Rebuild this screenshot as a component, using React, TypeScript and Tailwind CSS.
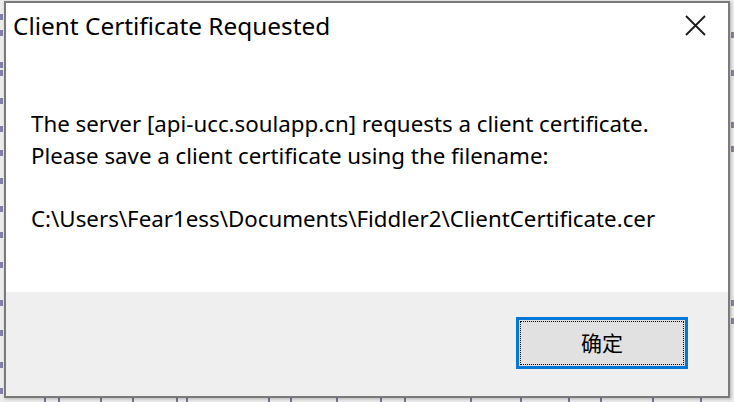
// fragments of the window behind the dialog, seen only in the thin strips around it
const leftMarks = [14, 30, 62, 70, 98, 126, 150, 178, 206, 232, 262, 300, 330, 362, 388];
const rightMarks = [32, 70, 122, 146, 300, 318];
const bottomMarks = [44, 58, 100, 132, 176, 186, 268, 290, 336, 380, 404, 470, 520, 568, 600, 652, 700];

export default function App() {
  return (
    <div className="relative w-[734px] h-[402px] overflow-hidden bg-[#ececec] font-['Segoe_UI','Noto_Sans','Noto_Sans_CJK_SC',sans-serif]">
      {/* page behind the dialog */}
      <div className="flex flex-col h-full">
        <div className="flex flex-1">
          <div className="w-[4px] flex flex-col">
            {leftMarks.map((y, i) => (
              <div
                key={i}
                className="w-[3px] h-[6px] bg-[#3b3b7a]/60"
                style={{ marginTop: i === 0 ? y : y - leftMarks[i - 1] - 6 }}
              />
            ))}
          </div>
          <div className="flex-1" />
          <div className="w-[4px] flex flex-col items-end">
            {rightMarks.map((y, i) => (
              <div
                key={i}
                className="w-[3px] h-[6px] bg-[#4a3a70]/60"
                style={{ marginTop: i === 0 ? y : y - rightMarks[i - 1] - 6 }}
              />
            ))}
          </div>
        </div>
        <div className="h-[4px] flex">
          {bottomMarks.map((x, i) => (
            <div
              key={i}
              className="w-[2px] h-[4px] bg-[#2a2a5e]/60"
              style={{ marginLeft: i === 0 ? x : x - bottomMarks[i - 1] - 2 }}
            />
          ))}
        </div>
      </div>

      <div className="absolute left-[4px] top-[1px] w-[726px] h-[397px] bg-white border-2 border-[#7a7a7a] flex flex-col shadow-[1px_1px_3px_rgba(0,0,0,0.25)]">
        <div className="flex items-start justify-between pl-[7px] pr-[22px] pt-[7px]">
          <h1 className="text-[24.4px] leading-[32px] text-black">Client Certificate Requested</h1>
          <svg width="21" height="21" viewBox="0 0 21 21" className="mt-[5px]">
            <path d="M1 1L20 20M20 1L1 20" stroke="#1a1a1a" strokeWidth="1.8" fill="none" />
          </svg>
        </div>
        <div className="flex-1 pl-[25px] pt-[66px] text-[22.3px] leading-[31.5px] text-black">
          <p>The server [api-ucc.soulapp.cn] requests a client certificate.</p>
          <p>Please save a client certificate using the filename:</p>
          <p className="mt-[31.5px]">C:\Users\Fear1ess\Documents\Fiddler2\ClientCertificate.cer</p>
        </div>
        <div className="h-[104px] bg-[#efefef] flex justify-end items-start pt-[25px] pr-[40px]">
          <button className="w-[172px] h-[52px] bg-[#e1e1e1] border-[3px] border-[#0078d7] p-[1px]">
            <span className="flex w-full h-full items-center justify-center border border-dotted border-black text-[21px] text-black font-['Noto_Sans_CJK_SC',sans-serif]">
              确定
            </span>
          </button>
        </div>
      </div>
    </div>
  );
}
